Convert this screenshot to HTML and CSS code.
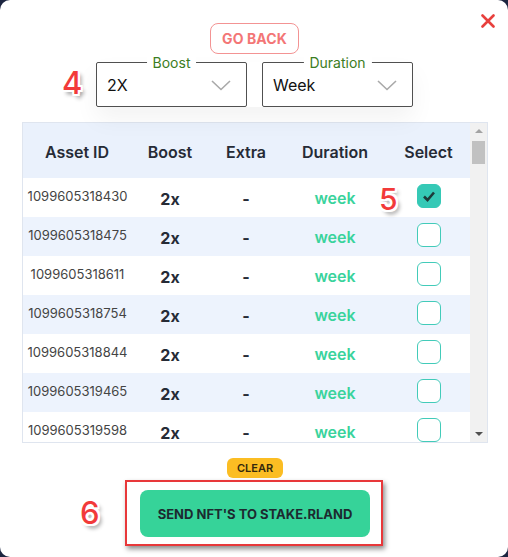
FILE: index.html
```html
<!DOCTYPE html>
<html>
<head>
<meta charset="utf-8">
<link rel="stylesheet" href="styles.css">
</head>
<body>
<div class="modal">
  <button class="close" aria-label="Close">
    <svg width="14" height="14" viewBox="0 0 14 14"><path d="M1.5 1.5 L12.5 12.5 M12.5 1.5 L1.5 12.5" stroke="#e8403d" stroke-width="2.6" stroke-linecap="round"/></svg>
  </button>
  <button class="go-back">GO BACK</button>

  <div class="selects">
    <span class="annot annot-4">4</span>
    <div class="select">
      <span class="select-label">Boost</span>
      <span class="select-value">2X</span>
      <svg class="chev" width="20" height="11" viewBox="0 0 20 11"><path d="M1 1 L10 9.5 L19 1" fill="none" stroke="#a9a9a9" stroke-width="1.6"/></svg>
    </div>
    <div class="select">
      <span class="select-label">Duration</span>
      <span class="select-value">Week</span>
      <svg class="chev" width="20" height="11" viewBox="0 0 20 11"><path d="M1 1 L10 9.5 L19 1" fill="none" stroke="#a9a9a9" stroke-width="1.6"/></svg>
    </div>
  </div>

  <div class="table-box">
    <div class="table">
      <div class="row head">
        <div>Asset ID</div><div>Boost</div><div>Extra</div><div>Duration</div><div>Select</div>
      </div>
      <div class="row">
        <div class="id">1099605318430</div><div class="b">2x</div><div class="b">-</div><div class="wk">week</div>
        <div class="sel"><span class="annot annot-5">5</span><span class="cb checked"><svg width="14" height="12" viewBox="0 0 14 12"><path d="M2 6.5 L5.5 10 L12 2.5" fill="none" stroke="#1d3b3a" stroke-width="2.6"/></svg></span></div>
      </div>
      <div class="row alt">
        <div class="id">1099605318475</div><div class="b">2x</div><div class="b">-</div><div class="wk">week</div><div class="sel"><span class="cb"></span></div>
      </div>
      <div class="row">
        <div class="id">1099605318611</div><div class="b">2x</div><div class="b">-</div><div class="wk">week</div><div class="sel"><span class="cb"></span></div>
      </div>
      <div class="row alt">
        <div class="id">1099605318754</div><div class="b">2x</div><div class="b">-</div><div class="wk">week</div><div class="sel"><span class="cb"></span></div>
      </div>
      <div class="row">
        <div class="id">1099605318844</div><div class="b">2x</div><div class="b">-</div><div class="wk">week</div><div class="sel"><span class="cb"></span></div>
      </div>
      <div class="row alt">
        <div class="id">1099605319465</div><div class="b">2x</div><div class="b">-</div><div class="wk">week</div><div class="sel"><span class="cb"></span></div>
      </div>
      <div class="row">
        <div class="id">1099605319598</div><div class="b">2x</div><div class="b">-</div><div class="wk">week</div><div class="sel"><span class="cb"></span></div>
      </div>
    </div>
    <div class="scrollbar">
      <span class="arrow up"></span>
      <span class="track"><span class="thumb"></span></span>
      <span class="arrow down"></span>
    </div>
  </div>

  <button class="clear">CLEAR</button>
  <div class="send-wrap">
    <span class="annot annot-6">6</span>
    <div class="frame">
      <button class="send">SEND NFT'S TO STAKE.RLAND</button>
    </div>
  </div>
</div>
</body>
</html>
```

FILE: styles.css
```css
* { box-sizing: border-box; }
html, body { margin: 0; padding: 0; }
body {
  background: #1c2540;
  font-family: "Inter", "Open Sans", "DejaVu Sans", sans-serif;
  width: 508px;
  height: 557px;
  overflow: hidden;
}
button { font-family: inherit; cursor: pointer; }

.modal {
  position: relative;
  width: 508px;
  height: 557px;
  background: #fff;
  border-radius: 10px;
  padding-top: 23px;
  display: flex;
  flex-direction: column;
  align-items: center;
}

.close {
  position: absolute;
  top: 14px;
  right: 13px;
  background: none;
  border: 0;
  padding: 0;
  width: 14px;
  height: 14px;
  display: flex;
}

.go-back {
  height: 31px;
  width: 89px;
  margin-left: 1px;
  border: 1px solid #f39393;
  border-radius: 8px;
  background: #fff;
  color: #f37676;
  font-weight: 700;
  font-size: 14px;
  letter-spacing: 0.1px;
  padding: 0;
}

.selects {
  position: relative;
  margin-top: 8px;
  margin-left: 1px;
  display: flex;
  gap: 15px;
  box-shadow: 0 12px 24px rgba(0, 0, 0, 0.05);
}

.select {
  position: relative;
  width: 151px;
  height: 45px;
  border: 1px solid #505050;
  border-radius: 2px;
  display: flex;
  align-items: center;
  justify-content: space-between;
  padding: 1px 15px 0 10px;
  background: #fff;
}
.select-label {
  position: absolute;
  top: -8px;
  left: 50%;
  transform: translateX(-50%);
  background: #fff;
  padding: 0 6px;
  font-size: 14px;
  line-height: 16px;
  color: #3c7d22;
}
.select-value {
  font-size: 16px;
  color: #111;
}

.annot {
  position: absolute;
  color: #f23a3a;
  font-family: "Inter", sans-serif;
  font-weight: 500;
  text-shadow:
    -2px 0 #fff, 2px 0 #fff, 0 -2px #fff, 0 2px #fff,
    -2px -2px #fff, 2px 2px #fff, -2px 2px #fff, 2px -2px #fff,
    3px 4px 4px rgba(0,0,0,0.45);
}
.annot-4 {
  left: -34px;
  top: 6px;
  font-size: 31px;
  line-height: 30px;
}

.table-box {
  align-self: flex-start;
  margin-top: 15px;
  margin-left: 22px;
  width: 466px;
  height: 321px;
  border: 1px solid #dfe5ef;
  display: flex;
  overflow: hidden;
}
.table {
  flex: 1;
  overflow: hidden;
}
.row {
  display: grid;
  grid-template-columns: 108px 78px 74px 104px 83px;
  height: 39px;
  align-items: center;
  text-align: center;
  background: #fff;
}
.row.alt { background: #edf3fd; }
.row.head {
  height: 55px;
  background: #eaf1fc;
  font-weight: 600;
  font-size: 16px;
  color: #262b36;
  padding-top: 2px;
}
.id {
  font-size: 13px;
  color: #444;
  padding-bottom: 4px;
  padding-left: 1px;
}
.b {
  font-weight: 700;
  font-size: 16px;
  color: #262b36;
  padding-top: 2px;
}
.wk {
  font-weight: 600;
  font-size: 16px;
  color: #3ad39c;
}
.sel {
  position: relative;
  display: flex;
  justify-content: center;
  padding-left: 1px;
  padding-bottom: 4px;
}
.cb {
  width: 24px;
  height: 24px;
  border: 1.5px solid #42cbb9;
  border-radius: 6px;
  background: #fff;
  display: flex;
  align-items: center;
  justify-content: center;
}
.cb.checked {
  background: #35c9b6;
  border-color: #35c9b6;
}
.annot-5 {
  left: -8px;
  top: 1px;
  font-size: 30px;
  line-height: 28px;
}

.scrollbar {
  width: 17px;
  background: #f1f1f1;
  display: flex;
  flex-direction: column;
  align-items: center;
}
.arrow {
  width: 0;
  height: 0;
  border-left: 4px solid transparent;
  border-right: 4px solid transparent;
  margin: 6px 0;
}
.arrow.up { border-bottom: 4px solid #a3a3a3; }
.arrow.down { border-top: 4px solid #505050; }
.track {
  flex: 1;
  width: 100%;
  padding: 2px 2px 0;
}
.thumb {
  display: block;
  height: 23px;
  background: #c1c1c1;
}

.clear {
  margin-top: 15px;
  width: 56px;
  height: 20px;
  border: 0;
  border-radius: 6px;
  background: #fbbd23;
  color: #34290c;
  font-weight: 600;
  font-size: 11px;
  padding: 0;
  margin-left: 2px;
}
.send-wrap {
  position: relative;
  margin-top: 2px;
}
.frame {
  width: 258px;
  height: 66px;
  border: 2px solid #e8383a;
  box-shadow: 2px 3px 5px rgba(0, 0, 0, 0.45);
  padding: 8px 0 0 13px;
}
.send {
  width: 230px;
  height: 47px;
  border: 0;
  border-radius: 8px;
  background: #36d399;
  color: #1c2a30;
  font-weight: 700;
  font-size: 13px;
  padding: 0;
}
.annot-6 {
  left: -45px;
  top: 18px;
  font-size: 31px;
  line-height: 30px;
}
```
